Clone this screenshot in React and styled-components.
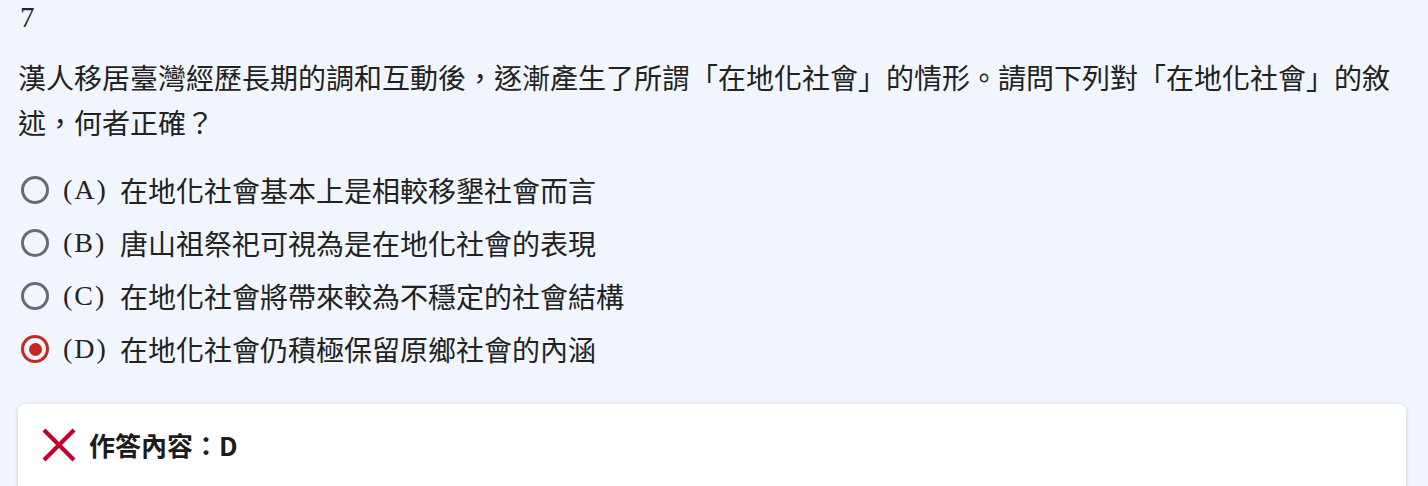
import React from 'react'
import styled, { createGlobalStyle } from 'styled-components'

const GlobalStyle = createGlobalStyle`
body {
    margin: 0;
    background: #f1f5fd;
    font-family: "Liberation Serif", "Noto Sans CJK TC", serif;
    color: #222;
}`

const Page = styled.div`
padding: 0 22px 0 18px;
display: flex;
flex-direction: column;`

const Number = styled.div`
font-size: 29px;
line-height: 32px;
padding-left: 2px;
margin-top: 1px;`

const Question = styled.div`
font-size: 28px;
line-height: 45px;
margin-top: 24px;
margin-right: -4px;
color: #222;`

const Options = styled.div`
display: flex;
flex-direction: column;
gap: 11px;
margin-top: 22px;`

const Option = styled.label`
display: flex;
align-items: center;
height: 42px;
font-size: 28px;
color: #222;`

const Radio = styled.span`
box-sizing: border-box;
width: 28px;
height: 28px;
margin-left: 3px;
border-radius: 50%;
border: 3px solid ${p => (p.checked ? '#c62828' : '#6b6b6b')};
display: flex;
align-items: center;
justify-content: center;
&::after {
    content: '';
    width: 13px;
    height: 13px;
    border-radius: 50%;
    background: #c62828;
    display: ${p => (p.checked ? 'block' : 'none')};
}`

const Letter = styled.span`
width: 57px;
margin-left: 14px;
font-family: "Liberation Serif", serif;
font-size: 28px;
letter-spacing: 2px;`

const Card = styled.div`
margin-top: 34px;
background: #fff;
border-radius: 7px;
box-shadow: 0 1px 4px rgba(0, 0, 0, 0.18);
padding: 24px 24px 40px;
display: flex;
align-items: center;
gap: 13px;`

const Result = styled.span`
font-family: "Noto Sans CJK TC", sans-serif;
font-weight: 700;
font-size: 26px;
line-height: 34px;
color: #1c1c1c;`

const WrongIcon = () => (
    <svg width="34" height="34" viewBox="0 0 34 34">
        <path d="M2 2 L32 32 M32 2 L2 32" stroke="#c2002b" strokeWidth="4.2" fill="none" />
    </svg>
)

const options = [
    { key: 'A', text: '在地化社會基本上是相較移墾社會而言' },
    { key: 'B', text: '唐山祖祭祀可視為是在地化社會的表現' },
    { key: 'C', text: '在地化社會將帶來較為不穩定的社會結構' },
    { key: 'D', text: '在地化社會仍積極保留原鄉社會的內涵' }
]

const App = () => {
    const answer = 'D'
    return (
        <Page>
            <GlobalStyle />
            <Number>7</Number>
            <Question>
                漢人移居臺灣經歷長期的調和互動後，逐漸產生了所謂「在地化社會」的情形。請問下列對「在地化社會」的敘述，何者正確？
            </Question>
            <Options>
                {options.map(o => (
                    <Option key={o.key}>
                        <Radio checked={o.key === answer} />
                        <Letter>({o.key})</Letter>
                        <span>{o.text}</span>
                    </Option>
                ))}
            </Options>
            <Card>
                <WrongIcon />
                <Result>作答內容：{answer}</Result>
            </Card>
        </Page>
    )
}

export default App
